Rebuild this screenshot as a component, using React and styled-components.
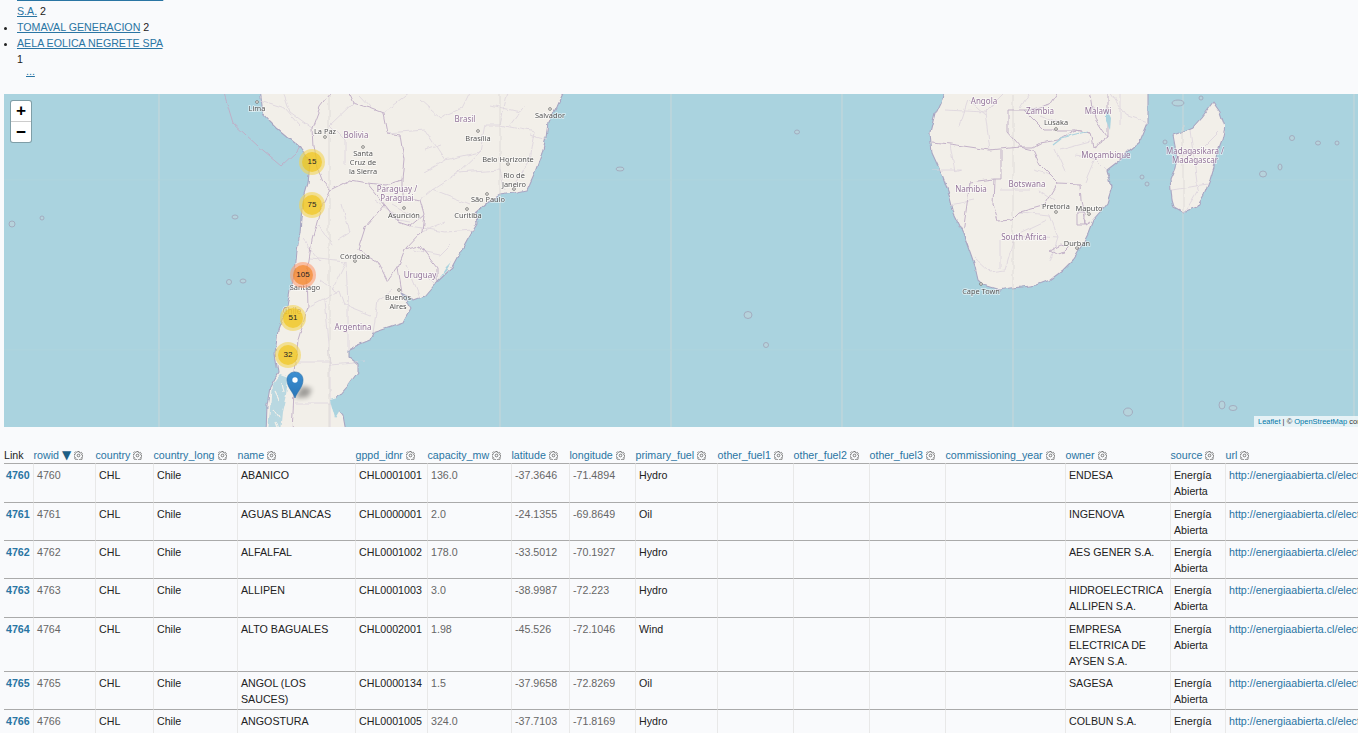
import React from 'react'
import styled, { createGlobalStyle } from 'styled-components'

const GlobalStyle = createGlobalStyle`
  html, body {
    margin: 0;
    height: 733px;
    overflow: hidden;
    background: #f9fafc;
  }
  body {
    font-family: "Liberation Sans", Arial, sans-serif;
    font-size: 10.67px;
    line-height: 16px;
    color: #222;
  }
`

const Page = styled.div`
  width: 1358px;
  height: 733px;
  overflow: hidden;
`
const FacetList = styled.ul`
  width: 148px;
  margin: -13px 0 0;
  padding: 0 0 0 17px;
  box-sizing: content-box;
  line-height: 16px;
`
const FacetLink = styled.a`
  color: #2a75a3;
  text-decoration: underline;
`
const More = styled.a`
  display: block;
  margin: -2px 0 0 9px;
  height: 14px;
  line-height: 12px;
  color: #2a75a3;
  text-decoration: underline;
`
const MapBox = styled.div`
  position: relative;
  height: 333px;
  margin: 15px 0 0 4px;
  background: #aad3df;
  overflow: hidden;
`
const MapDrawing = styled.svg`
  display: block;
  width: 1354px;
  height: 333px;
`
const ZoomControl = styled.div`
  position: absolute;
  left: 7px;
  top: 7px;
  width: 20px;
  border-radius: 2px;
  background: #fff;
  box-shadow: 0 0 0 1px rgba(0, 0, 0, 0.25);
`
const ZoomButton = styled.div`
  height: 20px;
  text-align: center;
  font: bold 16px/20px "DejaVu Sans Mono", monospace;
  color: #000;
  border-bottom: ${p => (p.$last ? 'none' : '1px solid #ccc')};
`
const Cluster = styled.div`
  position: absolute;
  left: ${p => p.$x - 4 - 13}px;
  top: ${p => p.$y - 94 - 13}px;
  width: 26px;
  height: 26px;
  border-radius: 50%;
  display: flex;
  align-items: center;
  justify-content: center;
  background: ${p => (p.$big ? 'rgba(253, 156, 115, 0.6)' : 'rgba(241, 211, 87, 0.6)')};
`
const ClusterCore = styled.div`
  width: 20px;
  height: 20px;
  border-radius: 50%;
  text-align: center;
  font-size: 8px;
  line-height: 19px;
  color: #222;
  background: ${p => (p.$big ? 'rgba(241, 128, 23, 0.6)' : 'rgba(240, 194, 12, 0.6)')};
`
const Pin = styled.svg`
  position: absolute;
  left: 282px;
  top: 277px;
  width: 36px;
  height: 32px;
`
const Attribution = styled.div`
  position: absolute;
  left: 1250px;
  bottom: 0;
  width: 140px;
  height: 11px;
  padding-left: 4px;
  font-size: 7.5px;
  line-height: 11px;
  white-space: nowrap;
  color: #333;
  background: rgba(255, 255, 255, 0.7);
`
const AttributionLink = styled.a`
  color: #0078a8;
`
const Table = styled.table`
  margin: 20.4px 0 0 4px;
  width: 1379.5px;
  table-layout: fixed;
  border-collapse: separate;
  border-spacing: 0;
  line-height: 16px;
`
const Head = styled.th`
  padding: 0;
  height: 16px;
  font-weight: normal;
  text-align: left;
  white-space: nowrap;
  color: ${p => (p.$plain ? '#222' : '#2a75a3')};
`
const SortArrow = styled.span`
  font-family: "DejaVu Sans", sans-serif;
  font-size: 12px;
  line-height: 10px;
  margin-left: 3px;
  color: #1f5f85;
`
const Gear = styled.svg`
  width: 9px;
  height: 9px;
  margin-left: 3px;
  vertical-align: -1px;
`
const Cell = styled.td`
  padding: 3px 3px 2.33px 3.5px;
  vertical-align: top;
  border-top: 1px solid #aaa;
  border-right: 1px solid #e8e8e8;
  color: ${p => (p.$muted ? '#666' : '#222')};
  font-weight: ${p => (p.$strong ? 'bold' : 'normal')};
  white-space: ${p => (p.$nowrap ? 'nowrap' : 'normal')};
  &:first-child { padding-left: 2px; padding-right: 0; }
`
const CellLink = styled.a`
  color: #2a75a3;
  text-decoration: none;
`

const COLUMNS = [
  ['Link', 29.5], ['rowid', 62], ['country', 58], ['country_long', 84], ['name', 118], ['gppd_idnr', 72],
  ['capacity_mw', 84], ['latitude', 58], ['longitude', 66], ['primary_fuel', 82], ['other_fuel1', 76],
  ['other_fuel2', 76], ['other_fuel3', 76], ['commissioning_year', 120], ['owner', 105], ['source', 55], ['url', 258],
]

const ROWS = [
  ['4760', 'ABANICO', 'CHL0001001', '136.0', '-37.3646', '-71.4894', 'Hydro', 'ENDESA'],
  ['4761', 'AGUAS BLANCAS', 'CHL0000001', '2.0', '-24.1355', '-69.8649', 'Oil', 'INGENOVA'],
  ['4762', 'ALFALFAL', 'CHL0001002', '178.0', '-33.5012', '-70.1927', 'Hydro', 'AES GENER S.A.'],
  ['4763', 'ALLIPEN', 'CHL0001003', '3.0', '-38.9987', '-72.223', 'Hydro', 'HIDROELECTRICA ALLIPEN S.A.'],
  ['4764', 'ALTO BAGUALES', 'CHL0002001', '1.98', '-45.526', '-72.1046', 'Wind', 'EMPRESA ELECTRICA DE AYSEN S.A.'],
  ['4765', 'ANGOL (LOS SAUCES)', 'CHL0000134', '1.5', '-37.9658', '-72.8269', 'Oil', 'SAGESA'],
  ['4766', 'ANGOSTURA', 'CHL0001005', '324.0', '-37.7103', '-71.8169', 'Hydro', 'COLBUN S.A.'],
]

const CLUSTERS = [[312, 162, 15], [312, 205, 75], [303, 275, 105, true], [293, 318, 51], [288, 355, 32]]

// page coordinates: the svg viewBox starts at the top left corner of the map
const SOUTH_AMERICA = 'M260 88 L263 113 L270 121 L277 128 L290 139 L300 147 L306 155 L310 163 L309 174 L308 183 L303 200 L301 218 L300 233 L297 250 L295 273 L290 290 L287 307 L278 330 L275 353 L278 373 L270 387 L267 405 L266 432 L346 432 L343 415 L333 403 L340 395 L347 387 L358 372 L358 365 L348 357 L348 350 L358 345 L370 340 L373 333 L388 328 L403 323 L411 308 L401 293 L414 300 L425 296 L437 282 L452 268 L467 240 L477 223 L475 213 L487 203 L500 195 L513 193 L527 190 L535 172 L542 153 L546 138 L548 123 L556 108 L565 88 Z'
const AFRICA = 'M947 88 L935 113 L930 133 L932 153 L943 177 L950 197 L955 217 L963 233 L969 250 L975 267 L978 280 L983 285 L1000 290 L1010 288 L1023 287 L1037 285 L1050 280 L1062 271 L1073 260 L1082 245 L1088 233 L1093 220 L1100 212 L1107 203 L1112 187 L1107 170 L1120 160 L1130 150 L1140 142 L1148 123 L1148 88 Z'
const MADAGASCAR = 'M1213 102 L1220 112 L1225 127 L1222 140 L1217 153 L1214 167 L1210 180 L1204 195 L1197 207 L1183 212 L1174 207 L1172 200 L1170 180 L1175 168 L1177 157 L1175 146 L1173 135 L1182 132 L1193 127 L1201 118 L1207 110 Z'

const COUNTRY_BORDERS = [
  'M312 240 L307 273 L308 307 L298 340 L295 373 L292 432',
  'M313 147 L312 128 L320 107 L333 90',
  'M347 90 L353 103 L370 108 L383 113 L387 133 L400 135 L404 160 L402 180',
  'M313 147 L317 167 L323 182 L330 190 L350 180 L367 183 L385 185 L402 180',
  'M367 183 L385 205 L398 222 L410 226 L424 214 L420 200 L402 196 L402 180',
  'M330 190 L320 210 L312 240',
  'M424 214 L422 232 L405 250 L398 268 L388 282',
  'M405 250 L420 246 L437 268 L437 282',
  'M398 268 L402 292',
  'M385 205 L365 228 L358 250 L378 262 L388 282',
  'M223 90 L233 123 L258 146 L282 166 L297 152 L300 147',
]
const STATE_BORDERS = [
  'M260 100 L285 108 L300 125', 'M283 92 L290 112 L312 128', 'M353 103 L330 125 L345 140 L345 165',
  'M383 113 L410 92', 'M387 133 L425 130 L445 160 L424 172', 'M445 160 L480 152 L485 125 L500 125 L508 92',
  'M480 152 L458 173 L432 190 L420 200', 'M500 125 L535 132 L530 160 L512 190', 'M458 173 L500 170 L505 190',
  'M410 226 L445 232 L474 230', 'M432 190 L470 205', 'M422 232 L445 222', 'M308 307 L340 290 L345 305 L370 315',
  'M332 290 L346 262 L348 305 L348 350', 'M324 300 L330 365 L365 362', 'M298 362 L330 362', 'M295 403 L333 403',
  'M310 258 L345 262', 'M320 280 L338 293', 'M392 290 L378 300 L373 333', 'M420 270 L435 285', 'M406 264 L420 298',
  'M330 427 L330 362', 'M397 220 L410 222', 'M392 205 L408 214', 'M440 118 L462 108 L470 92', 'M425 150 L440 145',
  'M342 205 L350 232 L338 240', 'M318 225 L332 245', 'M303 240 L320 262', 'M375 200 L395 215', 'M360 95 L372 108',
  'M420 100 L440 118', 'M525 105 L510 125', 'M490 105 L520 112', 'M530 135 L548 140', 'M415 250 L440 255 L450 245',
]
const AFRICA_COUNTRY = [
  'M932 142 L950 144 L990 150 L1020 147 L1033 150',
  'M1008 110 L1008 133 L1020 147 L1033 147 L1040 143 L1058 140 L1075 130 L1090 133',
  'M1008 110 L1032 110 L1050 105 L1060 90',
  'M1033 150 L1040 165 L1058 183 L1080 184 L1081 200',
  'M1001 150 L1001 179 L994 179 L993 205 L998 221 L1012 220 L1020 212 L1045 205 L1058 183',
  'M994 179 L970 182 L963 233',
  'M1081 200 L1085 225 L1090 222',
  'M1075 130 L1090 133 L1093 148 L1108 138 L1108 90',
  'M1090 90 L1095 118 L1108 138',
  'M1075 130 L1045 130 L1025 110',
  'M1060 245 L1050 250 L1057 254 L1065 252 L1070 247 Z',
  'M1077 213 L1085 213 L1085 225 L1077 225 Z',
]
const AFRICA_STATE = [
  'M945 110 L985 112 L1005 92', 'M960 125 L968 100 L985 115', 'M932 170 L961 170', 'M950 144 L955 172 L962 170',
  'M975 258 L990 272 L1005 270 L1015 235 L1047 220', 'M1015 235 L1058 238 L1050 262', 'M1020 212 L1050 215 L1058 238',
  'M1055 150 L1065 172', 'M1075 155 L1095 158 L1107 170', 'M1095 158 L1085 182', 'M1110 92 L1125 115 L1148 123',
  'M1000 190 L1030 190', 'M1033 170 L1050 175', 'M1040 115 L1065 125', 'M1177 157 L1200 150 L1218 132',
  'M1172 190 L1208 184', 'M1190 130 L1198 190 L1185 212', 'M985 112 L990 150', 'M950 205 L975 200', 'M1030 92 L1020 108',
  'M1060 150 L1090 142', 'M1040 190 L1055 200', 'M1120 92 L1120 125', 'M1000 240 L1000 268',
]
const ISLANDS = [
  [12, 224, 3, 3], [42, 218, 2, 2], [235, 217, 3, 2], [229, 282, 2.5, 2.5], [243, 281, 3, 2], [620, 169, 4, 2],
  [797, 132, 2.5, 2], [748, 315, 4, 3.5], [766, 345, 2.5, 2.5], [1128, 412, 4.5, 4], [1222, 405, 3, 4],
  [1233, 408, 4, 2.5], [1142, 177, 2, 2], [1147, 184, 2, 2], [1165, 142, 2, 2], [1178, 103, 6, 3], [1201, 98, 2, 2],
  [1263, 174, 3.5, 3], [1280, 167, 2, 3], [1292, 138, 2.5, 2.5], [1318, 143, 2.5, 2], [1337, 143, 2, 2],
]
const CITY_LABELS = [
  ['Lima', 257, 111], ['La Paz', 325, 134], ['Santa', 363, 156], ['Cruz de', 363, 165], ['la Sierra', 363, 174],
  ['Brasília', 478, 141], ['Salvador', 550, 118], ['Belo Horizonte', 508, 162], ['Rio de', 514, 178], ['Janeiro', 514, 187],
  ['São Paulo', 488, 202], ['Curitiba', 468, 218], ['Asunción', 404, 218], ['Córdoba', 355, 259], ['Santiago', 305, 290],
  ['Buenos', 398, 300], ['Aires', 398, 309], ['Lusaka', 1056, 125], ['Pretoria', 1056, 209], ['Maputo', 1089, 211],
  ['Durban', 1077, 246], ['Cape Town', 981, 294],
]
const COUNTRY_LABELS = [
  ['Bolivia', 356, 138], ['Brasil', 465, 122], ['Paraguay /', 397, 192], ['Paraguai', 397, 201], ['Uruguay', 420, 278],
  ['Argentina', 353, 330], ['Chile', 292, 314], ['Angola', 984, 104], ['Zambia', 1040, 114], ['Malawi', 1098, 114],
  ['Moçambique', 1106, 158], ['Namibia', 971, 192], ['Botswana', 1027, 187], ['South Africa', 1024, 240],
  ['Madagasikara /', 1195, 154], ['Madagascar', 1195, 163],
]
const TOWNS = [
  [257, 102], [325, 137], [363, 147], [478, 131], [550, 109], [508, 164], [514, 189], [487, 194], [467, 209],
  [404, 208], [355, 261], [399, 290], [1056, 129], [1056, 212], [1089, 214], [1077, 248], [981, 284],
]

function WorldMap() {
  return (
    <MapDrawing viewBox="4 94 1354 333">
      <defs>
        <filter id="soft" x="0" y="0" width="100%" height="100%">
          <feGaussianBlur stdDeviation="0.4" />
        </filter>
        <filter id="rough" x="0" y="0" width="100%" height="100%">
          <feTurbulence type="fractalNoise" baseFrequency="0.09" numOctaves="2" seed="4" />
          <feDisplacementMap in="SourceGraphic" scale="5" xChannelSelector="R" yChannelSelector="G" />
          <feGaussianBlur stdDeviation="0.45" />
        </filter>
      </defs>
      <g filter="url(#soft)">
        {[159, 329, 500, 671, 842, 1013, 1183, 1354].map(x => (
          <path key={x} d={`M${x} 94V427`} stroke="#c0d6dc" strokeWidth="1.4" />
        ))}
        <path d="M4 180H1358M4 350H1358" stroke="#b2d6dc" strokeWidth="1" opacity="0.6" />
        {ISLANDS.map(([x, y, rx, ry]) => (
          <ellipse key={`${x}-${y}`} cx={x} cy={y} rx={rx} ry={ry} fill="#b6d3dc" stroke="#a0a8bb" strokeWidth="0.9" />
        ))}
      </g>
      <g filter="url(#rough)">
        <g fill="#f2efe9" stroke="#a9a6c2" strokeWidth="1.1" strokeLinejoin="round">
          <path d={SOUTH_AMERICA} />
          <path d={AFRICA} />
          <path d={MADAGASCAR} />
        </g>
        <g fill="none" stroke="#dcd3dd" strokeWidth="0.8">
          {[...STATE_BORDERS, ...AFRICA_STATE].map(d => <path key={d} d={d} />)}
          <path d="M329 94V427M500 94V196M1013 94V288M1183 125V212" stroke="#dad7d4" />
        </g>
        <g fill="none" stroke="#c0aec6" strokeWidth="0.95">
          {[...COUNTRY_BORDERS, ...AFRICA_COUNTRY].map(d => <path key={d} d={d} />)}
        </g>
        {/* Chiloe and the fjords, the lakes and rivers */}
        <g fill="#b9d8e1" stroke="none">
          <path d="M272 385 L280 375 L288 378 L286 395 L282 412 L280 432 L268 432 Z" />
          <path d="M1106 108 L1111 118 L1110 130 L1106 122 Z" fill="#aad3df" />
          <path d="M330 400 L341 397 L340 410 L335 418 Z" fill="#aad3df" />
          <path d="M452 262 L446 272 L440 278 L446 268 Z" fill="#aad3df" />
        </g>
        <g stroke="#f2efe9" strokeWidth="1.2" fill="none">
          <path d="M275 392 L279 400M273 410 L278 418M282 382 L284 392M276 422 L279 430" />
        </g>
        <path d="M1053 145 L1062 138 L1072 135 L1088 131" fill="none" stroke="#aad3df" strokeWidth="1.2" />
      </g>
      <g filter="url(#soft)">
        {TOWNS.map(([x, y]) => (
          <circle key={`${x}-${y}`} cx={x} cy={y} r="1.4" fill="#f2efe9" stroke="#666" strokeWidth="0.7" />
        ))}
        <g fontFamily="Noto Sans, sans-serif" textAnchor="middle" stroke="#fff" strokeWidth="1.6" strokeOpacity="0.6" paintOrder="stroke">
          {CITY_LABELS.map(([t, x, y]) => <text key={t} x={x} y={y} fontSize="7.4" fill="#555">{t}</text>)}
          {COUNTRY_LABELS.map(([t, x, y]) => <text key={t} x={x} y={y} fontSize="8" fill="#93749a">{t}</text>)}
        </g>
      </g>
    </MapDrawing>
  )
}

const Cog = () => (
  <Gear viewBox="0 0 16 16" fill="none" stroke="#666" strokeWidth="1.5">
    <circle cx="8" cy="8" r="2.4" />
    <path d="M6.8 .8h2.4l.4 2.1 1.6.7 1.8-1.2 1.7 1.7-1.2 1.8.7 1.6 2.1.4v2.4l-2.1.4-.7 1.6 1.2 1.8-1.7 1.7-1.8-1.2-1.6.7-.4 2.1H6.8l-.4-2.1-1.6-.7-1.8 1.2-1.7-1.7 1.2-1.8-.7-1.6-2.1-.4V6.8l2.1-.4.7-1.6-1.2-1.8 1.7-1.7 1.8 1.2 1.6-.7z" />
  </Gear>
)

export default function App() {
  return (
    <Page>
      <GlobalStyle />
      <FacetList>
        <li><FacetLink href="#">EMPRESA ELECTRICA SAGA S.A.</FacetLink> 2</li>
        <li><FacetLink href="#">TOMAVAL GENERACION</FacetLink> 2</li>
        <li><FacetLink href="#">AELA EOLICA NEGRETE SPA</FacetLink> 1</li>
        <More href="#">...</More>
      </FacetList>

      <MapBox>
        <WorldMap />
        <ZoomControl>
          <ZoomButton>+</ZoomButton>
          <ZoomButton $last>−</ZoomButton>
        </ZoomControl>
        {CLUSTERS.map(([x, y, n, big]) => (
          <Cluster key={n} $x={x} $y={y} $big={big}>
            <ClusterCore $big={big}>{n}</ClusterCore>
          </Cluster>
        ))}
        <Pin viewBox="0 0 36 32">
          <defs>
            <linearGradient id="pinBlue" x1="0" y1="0" x2="0" y2="1">
              <stop offset="0" stopColor="#3d8fd1" />
              <stop offset="1" stopColor="#2a76b8" />
            </linearGradient>
            <filter id="pinShadow" x="-50%" y="-50%" width="200%" height="200%"><feGaussianBlur stdDeviation="2.5" /></filter>
          </defs>
          <path d="M9 27 L16 15 L26 18 L22 26 Z" fill="#000" opacity="0.35" filter="url(#pinShadow)" />
          <path d="M9 27 C7 21 1 16 1 9 C1 4 4.5 1 9 1 C13.5 1 17 4 17 9 C17 16 11 21 9 27 Z" fill="url(#pinBlue)" stroke="#2a6fa8" strokeWidth="0.6" />
          <circle cx="9" cy="9" r="2.7" fill="#fff" />
        </Pin>
        <Attribution>
          <AttributionLink>Leaflet</AttributionLink> | © <AttributionLink>OpenStreetMap</AttributionLink> contributors
        </Attribution>
      </MapBox>

      <Table>
        <colgroup>
          {COLUMNS.map(([name, width]) => <col key={name} width={width} />)}
        </colgroup>
        <thead>
          <tr>
            {COLUMNS.map(([name], i) => (
              <Head key={name} $plain={i === 0}>
                {name}
                {name === 'rowid' && <SortArrow>▼</SortArrow>}
                {i > 0 && <Cog />}
              </Head>
            ))}
          </tr>
        </thead>
        <tbody>
          {ROWS.map(([id, name, gppd, mw, lat, lon, fuel, owner]) => (
            <tr key={id}>
              <Cell $strong><CellLink href="#">{id}</CellLink></Cell>
              <Cell $muted>{id}</Cell>
              <Cell>CHL</Cell>
              <Cell>Chile</Cell>
              <Cell>{name}</Cell>
              <Cell>{gppd}</Cell>
              <Cell $muted>{mw}</Cell>
              <Cell $muted>{lat}</Cell>
              <Cell $muted>{lon}</Cell>
              <Cell>{fuel}</Cell>
              <Cell />
              <Cell />
              <Cell />
              <Cell />
              <Cell>{owner}</Cell>
              <Cell>Energía Abierta</Cell>
              <Cell $nowrap><CellLink href="#">http://energiaabierta.cl/electricidad/</CellLink></Cell>
            </tr>
          ))}
        </tbody>
      </Table>
    </Page>
  )
}
